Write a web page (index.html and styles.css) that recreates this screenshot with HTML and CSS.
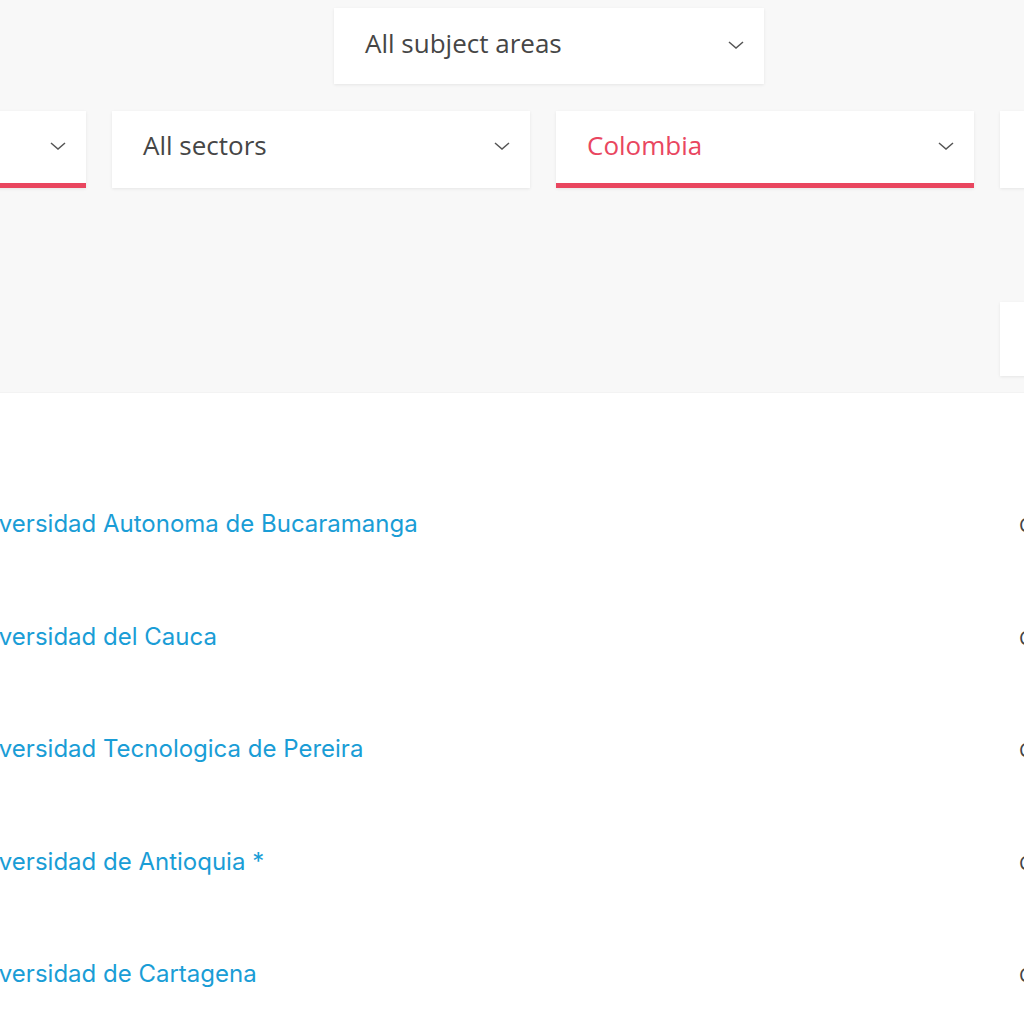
FILE: index.html
```html
<!DOCTYPE html>
<html lang="en">
<head>
<meta charset="utf-8">
<title>Rankings</title>
<link rel="stylesheet" href="styles.css">
</head>
<body>
  <section class="filters">
    <div class="filter-top">
      <div class="select">
        <span class="select-label">All subject areas</span>
        <svg class="chevron" viewBox="0 0 16 8" aria-hidden="true"><path d="M1 1l7 6 7-6"/></svg>
      </div>
    </div>
    <div class="filter-grid">
      <div class="select is-active">
        <span class="select-label"></span>
        <svg class="chevron" viewBox="0 0 16 8" aria-hidden="true"><path d="M1 1l7 6 7-6"/></svg>
      </div>
      <div class="select">
        <span class="select-label">All sectors</span>
        <svg class="chevron" viewBox="0 0 16 8" aria-hidden="true"><path d="M1 1l7 6 7-6"/></svg>
      </div>
      <div class="select is-active">
        <span class="select-label">Colombia</span>
        <svg class="chevron" viewBox="0 0 16 8" aria-hidden="true"><path d="M1 1l7 6 7-6"/></svg>
      </div>
      <div class="select">
        <span class="select-label"></span>
      </div>
    </div>
    <div class="filter-grid sort-row">
      <div class="select sort-select">
        <span class="select-label"></span>
      </div>
    </div>
  </section>

  <section class="results">
    <ul class="result-list">
      <li class="result"><a class="result-name" href="#">Universidad Autonoma de Bucaramanga</a><span class="result-country">Colombia</span></li>
      <li class="result"><a class="result-name" href="#">Universidad del Cauca</a><span class="result-country">Colombia</span></li>
      <li class="result"><a class="result-name" href="#">Universidad Tecnologica de Pereira</a><span class="result-country">Colombia</span></li>
      <li class="result"><a class="result-name" href="#">Universidad de Antioquia *</a><span class="result-country">Colombia</span></li>
      <li class="result"><a class="result-name" href="#">Universidad de Cartagena</a><span class="result-country">Colombia</span></li>
    </ul>
  </section>
</body>
</html>
```
FILE: styles.css
```css
html, body {
  margin: 0;
  padding: 0;
  background: #ffffff;
  overflow: hidden;
}

body {
  width: 1024px;
  height: 1024px;
  font-family: "Open Sans", "Noto Sans", sans-serif;
  color: #444444;
}

/* Filter band */
.filters {
  background: #f8f8f8;
  padding-top: 8px;
  height: 393px;
  border-bottom: 1px solid #f3f3f3;
  box-sizing: border-box;
}

.filter-top {
  display: flex;
  padding-left: 334px;
}

.filter-top .select {
  width: 430px;
  height: 76px;
  border-bottom: 0;
}

.filter-grid {
  display: grid;
  grid-template-columns: repeat(4, 418px);
  column-gap: 26px;
  margin-left: -332px;
  margin-top: 27px;
}

.select {
  position: relative;
  display: flex;
  align-items: center;
  justify-content: space-between;
  height: 77px;
  box-sizing: border-box;
  padding: 0 20px 0 31px;
  background: #ffffff;
  border-bottom: 5px solid transparent;
  box-shadow: 0 1px 3px rgba(0, 0, 0, 0.08);
  font-size: 26px;
  color: #464646;
}

.select.is-active {
  border-bottom-color: #e9465f;
}

.select.is-active .select-label {
  color: #e9465f;
}

.select .select-label {
  line-height: 1;
  margin-top: -5px;
}

.filter-top .select-label {
  margin-top: -6px;
}

.chevron {
  width: 16px;
  height: 8px;
  margin-top: -2px;
  fill: none;
  stroke: #555555;
  stroke-width: 1.5;
}

.sort-row {
  margin-top: 114px;
}

.sort-select {
  grid-column: 4;
  height: 74px;
  border-bottom: 0;
}

/* Results list */
.results {
  padding-top: 116px;
}

.result-list {
  list-style: none;
  margin: 0 0 0 -39px;
  padding: 0;
}

.result {
  display: flex;
  align-items: baseline;
  height: 112.5px;
}

.result-name {
  flex: 0 0 1058px;
  font-family: "Inter", "Lato", sans-serif;
  font-size: 24px;
  color: #1a9dd6;
  text-decoration: none;
}

.result-country {
  font-size: 20px;
  color: #444444;
  white-space: nowrap;
}
```
